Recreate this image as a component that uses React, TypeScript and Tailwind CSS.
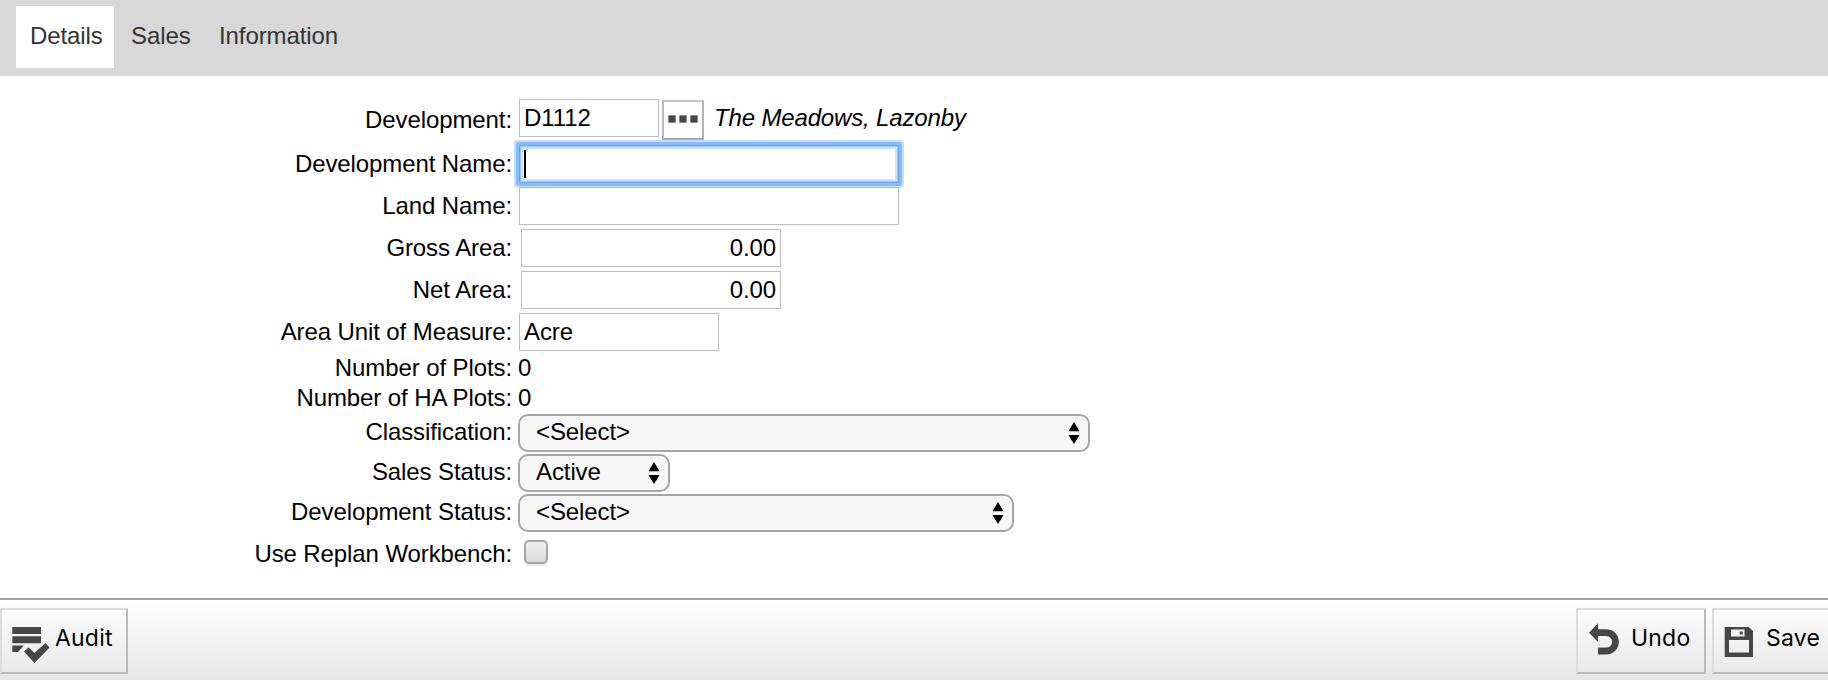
import React from "react";

function Row({ label, className, labelClass, children }: { label: string; className: string; labelClass: string; children: React.ReactNode }) {
  return (
    <div className={`flex items-start ${className}`}>
      <label className={`mr-px w-[512px] shrink-0 text-right whitespace-nowrap ${labelClass}`}>{label}</label>
      {children}
    </div>
  );
}

function Field({ className, value = "" }: { className: string; value?: string }) {
  return (
    <input
      className={`h-[38px] border border-[#bdbdbd] bg-white px-1 pt-1 pb-[5px] leading-[27px] tracking-[-0.1px] outline-none ${className}`}
      defaultValue={value}
    />
  );
}

function Picker({ className, value }: { className: string; value: string }) {
  return (
    <div className={`ml-[5px] flex h-[38px] items-start justify-between rounded-[10px] border-2 border-[#a5a5a5] bg-[#f7f7f7] pr-2 pl-4 ${className}`}>
      <span className="pt-[2px]">{value}</span>
      <svg className="mt-[6px]" width="12" height="22" viewBox="0 0 12 22">
        <path d="M6 0 11.5 9.2H.5ZM.5 13h11L6 22Z" fill="#000" />
      </svg>
    </div>
  );
}

function FooterButton({ className, children }: { className: string; children: React.ReactNode }) {
  return (
    <button className={`flex h-[66px] shrink-0 items-start border-2 border-t-[#dcdcdc] border-r-[#bababa] border-b-[#bababa] border-l-[#dcdcdc] bg-linear-to-b from-[#fbfbfb] to-[#e9e9e9] font-[Inter,'Liberation_Sans',sans-serif] text-[23px] leading-[27px] tracking-[0.2px] ${className}`}>
      {children}
    </button>
  );
}

export default function App() {
  return (
    <div className="flex h-[680px] w-[1828px] flex-col overflow-hidden bg-white font-['Liberation_Sans',Arial,sans-serif] text-[24px] leading-[27px] tracking-[-0.1px] text-black">
      <nav className="flex h-[76px] shrink-0 bg-[#d8d8d8] pt-[6px] pl-4 text-[#333]">
        <a className="h-[62px] w-[98px] bg-white pt-4 pl-[14px]">Details</a>
        <a className="w-[88px] pt-4 pl-[17px]">Sales</a>
        <a className="pt-4 pl-[17px]">Information</a>
      </nav>

      <main className="flex h-[522px] shrink-0 flex-col pt-[23px]">
        <Row label="Development:" className="h-[46px]" labelClass="pt-[7px]">
          <Field className="ml-[6px] w-[140px]" value="D1112" />
          <button className="mt-px ml-[3px] flex h-[40px] w-[42px] items-center justify-center gap-[3px] border-2 border-t-[#c4c4c4] border-r-[#b4b4b4] border-b-[#ababab] border-l-[#b8b8b8] bg-white pb-[2px]">
            <i className="size-2 rounded-[1px] border border-[#8a8a8a] bg-[#464646]" />
            <i className="size-2 rounded-[1px] border border-[#8a8a8a] bg-[#464646]" />
            <i className="size-2 rounded-[1px] border border-[#8a8a8a] bg-[#464646]" />
          </button>
          <em className="pt-[5px] pl-[10px] tracking-[-0.15px]">The Meadows, Lazonby</em>
        </Row>
        <Row label="Development Name:" className="h-[42px]" labelClass="pt-[5px]">
          <div className="ml-[6px] flex h-[38px] w-[380px] rounded-[1px] border border-[#69a6e8] bg-white pt-1 pl-1 shadow-[inset_0_0_0_1px_#9bcafb,inset_0_0_0_3px_#cbe3fd,0_0_0_3px_#84bdfb,0_0_0_5px_#c5dffc]">
            <span className="h-[28px] w-[2px] bg-black" />
          </div>
        </Row>
        <Row label="Land Name:" className="h-[42px]" labelClass="pt-[5px]">
          <Field className="relative ml-[6px] w-[380px]" />
        </Row>
        <Row label="Gross Area:" className="h-[42px]" labelClass="pt-[5px]">
          <Field className="ml-[8px] w-[260px] text-right" value="0.00" />
        </Row>
        <Row label="Net Area:" className="h-[42px]" labelClass="pt-[5px]">
          <Field className="ml-[8px] w-[260px] text-right" value="0.00" />
        </Row>
        <Row label="Area Unit of Measure:" className="h-[40px]" labelClass="pt-[5px]">
          <Field className="ml-[6px] w-[200px]" value="Acre" />
        </Row>
        <Row label="Number of Plots:" className="h-[30px]" labelClass="pt-px">
          <span className="pt-px pl-[5px]">0</span>
        </Row>
        <Row label="Number of HA Plots:" className="h-[31px]" labelClass="pt-px">
          <span className="pt-px pl-[5px]">0</span>
        </Row>
        <Row label="Classification:" className="h-[40px]" labelClass="pt-1">
          <Picker className="w-[572px]" value="<Select>" />
        </Row>
        <Row label="Sales Status:" className="h-[40px]" labelClass="pt-1">
          <Picker className="w-[152px]" value="Active" />
        </Row>
        <Row label="Development Status:" className="h-[40px]" labelClass="pt-1">
          <Picker className="w-[496px]" value="<Select>" />
        </Row>
        <Row label="Use Replan Workbench:" className="h-[42px]" labelClass="pt-[6px]">
          <span className="mt-[6px] ml-[11px] size-6 rounded-[5px] border-2 border-[#a6a6a6] bg-linear-to-b from-[#f0f0f0] to-[#dadada] shadow-[0_2px_1px_#ececec]" />
        </Row>
      </main>

      <footer className="flex h-[82px] shrink-0 border-t-2 border-[#a3a3a3] bg-linear-to-b from-white to-[#e6e6e6] pt-2">
        <FooterButton className="w-[128px] pl-[10px]">
          <svg className="mt-[16px]" width="38" height="38" viewBox="0 0 38 38" fill="#464646">
            <path d="M.3 1h28.700v7H.3zM.3 10.300h28.700v7H.3zM.3 19.500h11.500L6 26H.3zM12 25.500l4.500-4 6 5.500L33.500 17l4 4.500-15 15.500Z" />
          </svg>
          <span className="mt-[15px] ml-[5px]">Audit</span>
        </FooterButton>
        <div className="grow" />
        <FooterButton className="w-[130px] pl-[11px]">
          <svg className="mt-[13px]" width="32" height="34" viewBox="0 0 32 34">
            <path d="M7 9.700h10.500a9 9.150 0 0 1 0 18.300H9" fill="none" stroke="#464646" strokeWidth="6.8" />
            <path d="M0 9.700 9 .3v18.800Z" fill="#464646" />
          </svg>
          <span className="mt-[15px] ml-[10px]">Undo</span>
        </FooterButton>
        <FooterButton className="mr-[-14px] ml-[6px] w-[130px] pl-[10px]">
          <svg className="mt-[17px]" width="30" height="31" viewBox="0 0 30 31">
            <path fillRule="evenodd" fill="#464646" d="M.7 0h24L29 4v26H.7ZM7 2.500v7h13.500v-7ZM5 13v12.500h20V13ZM15.700 4.500h3v3h-3Z" />
          </svg>
          <span className="mt-[15px] ml-[12px]">Save</span>
        </FooterButton>
      </footer>
    </div>
  );
}
